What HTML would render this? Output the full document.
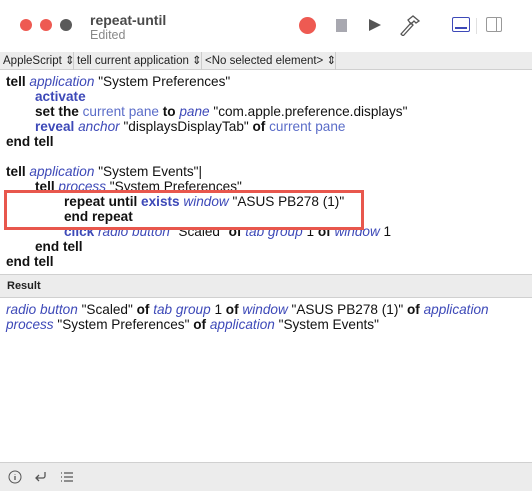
<!DOCTYPE html>
<html><head><style>
*{margin:0;padding:0;box-sizing:border-box}
body{width:532px;height:491px;background:#fff;font-family:"Liberation Sans",sans-serif;position:relative;overflow:hidden}
.tb{position:absolute;left:0;top:0;width:532px;height:52px;background:#fff}
.dot{position:absolute;top:19px;width:12px;height:12px;border-radius:50%}
.bar{position:absolute;left:0;top:52px;width:532px;height:18px;background:#ececec;border-bottom:1px solid #d0d0d0;font-size:11.5px;color:#222;line-height:18px}
.bar span{position:absolute;top:0}
.code{position:absolute;left:0;top:70px;width:532px;height:202px;font-size:13.6px;color:#111}
.l{position:absolute;white-space:pre;line-height:15px}
b{font-weight:bold;color:#111}
.bb{font-weight:bold;color:#3d49b8}
.i{font-style:italic;color:#3d49b8}
.p{color:#5a6cc8}
.rh{position:absolute;left:0;top:274px;width:532px;height:24px;background:#ececec;border-top:1px solid #d0d0d0;border-bottom:1px solid #d0d0d0;font-size:11px;font-weight:bold;line-height:22px;padding-left:7px;color:#222}
.res{position:absolute;left:6px;top:302px;font-size:13.6px;line-height:15px;color:#111;width:500px}
.bot{position:absolute;left:0;top:462px;width:532px;height:29px;background:#ececec;border-top:1px solid #d0d0d0}
</style></head><body>
<div class="tb">
<div class="dot" style="left:20px;background:#ee5a52"></div>
<div class="dot" style="left:40px;background:#ee5a52"></div>
<div class="dot" style="left:60px;background:#5a5a5a"></div>
<div style="position:absolute;left:90px;top:12px;font-size:14px;font-weight:bold;color:#4a4a4a">repeat-until</div>
<div style="position:absolute;left:90px;top:28px;font-size:12.5px;color:#888">Edited</div>
<div style="position:absolute;left:299px;top:17px;width:17px;height:17px;border-radius:50%;background:#ee5a52"></div>
<div style="position:absolute;left:336px;top:19px;width:11px;height:13px;background:#a8a8b0"></div>
<svg style="position:absolute;left:368px;top:18px" width="14" height="14"><path d="M1 1 L13 7 L1 13Z" fill="#555"/></svg>
<svg style="position:absolute;left:398px;top:14px" width="24" height="22"><g fill="none" stroke="#555" stroke-width="1.3"><path d="M3 20 L13 9 L15 11 L5 22Z"/><path d="M10 6 L15 2 L21 7 L18 9 L16 7 L13 10Z"/></g></svg>
<div style="position:absolute;left:452px;top:17px;width:18px;height:15px;border:1.5px solid #3d49b8;border-radius:2px"><div style="position:absolute;left:2px;right:2px;bottom:2px;height:2px;background:#3d49b8"></div></div>
<div style="position:absolute;left:476px;top:18px;width:1px;height:16px;background:#e0e0e0"></div>
<div style="position:absolute;left:486px;top:17px;width:16px;height:15px;border:1.3px solid #999;border-radius:2px"><div style="position:absolute;right:4px;top:0;bottom:0;width:1px;background:#999"></div></div>
</div>
<div class="bar">
<span style="left:3px">AppleScript ⇕</span>
<span style="left:73px;width:1px;height:18px;background:#ccc"></span>
<span style="left:77px">tell current application ⇕</span>
<span style="left:201px;width:1px;height:18px;background:#ccc"></span>
<span style="left:205px">&lt;No selected element&gt; ⇕</span>
<span style="left:335px;width:1px;height:18px;background:#ccc"></span>
</div>
<div class="code">
<div class="l" style="left:6px;top:4px"><b>tell</b> <span class="i">application</span> "System Preferences"</div>
<div class="l" style="left:35px;top:19px"><span class="bb">activate</span></div>
<div class="l" style="left:35px;top:34px"><b>set the</b> <span class="p">current pane</span> <b>to</b> <span class="i">pane</span> "com.apple.preference.displays"</div>
<div class="l" style="left:35px;top:49px"><span class="bb">reveal</span> <span class="i">anchor</span> "displaysDisplayTab" <b>of</b> <span class="p">current pane</span></div>
<div class="l" style="left:6px;top:64px"><b>end tell</b></div>
<div class="l" style="left:6px;top:94px"><b>tell</b> <span class="i">application</span> "System Events"|</div>
<div class="l" style="left:35px;top:109px"><b>tell</b> <span class="i">process</span> "System Preferences"</div>
<div class="l" style="left:64px;top:154px"><span class="bb">click</span> <span class="i">radio button</span> "Scaled" <b>of</b> <span class="i">tab group</span> 1 <b>of</b> <span class="i">window</span> 1</div>
<div class="l" style="left:35px;top:169px"><b>end tell</b></div>
<div class="l" style="left:6px;top:184px"><b>end tell</b></div>
<div style="position:absolute;left:4px;top:120px;width:360px;height:40px;border:3px solid #e8574d;background:#fff"></div>
<div class="l" style="left:64px;top:124px"><b>repeat until</b> <span class="bb">exists</span> <span class="i">window</span> "ASUS PB278 (1)"</div>
<div class="l" style="left:64px;top:139px"><b>end repeat</b></div>
</div>
<div class="rh">Result</div>
<div class="res"><span class="i">radio button</span> "Scaled" <b>of</b> <span class="i">tab group</span> 1 <b>of</b> <span class="i">window</span> "ASUS PB278 (1)" <b>of</b> <span class="i">application process</span> "System Preferences" <b>of</b> <span class="i">application</span> "System Events"</div>
<div class="bot">
<svg style="position:absolute;left:8px;top:7px" width="14" height="14"><circle cx="7" cy="7" r="6" fill="none" stroke="#555"/><path d="M7 6v4M7 4v0.5" stroke="#555" stroke-width="1.3"/></svg>
<svg style="position:absolute;left:33px;top:7px" width="14" height="14"><path d="M12 2v4a2 2 0 0 1-2 2H3M6 5L3 8l3 3" fill="none" stroke="#555" stroke-width="1.3"/></svg>
<svg style="position:absolute;left:60px;top:8px" width="14" height="12"><g stroke="#555" stroke-width="1.2"><path d="M1 2h1M1 6h1M1 10h1M4 2h9M4 6h9M4 10h9"/></g></svg>
</div>
</body></html>
